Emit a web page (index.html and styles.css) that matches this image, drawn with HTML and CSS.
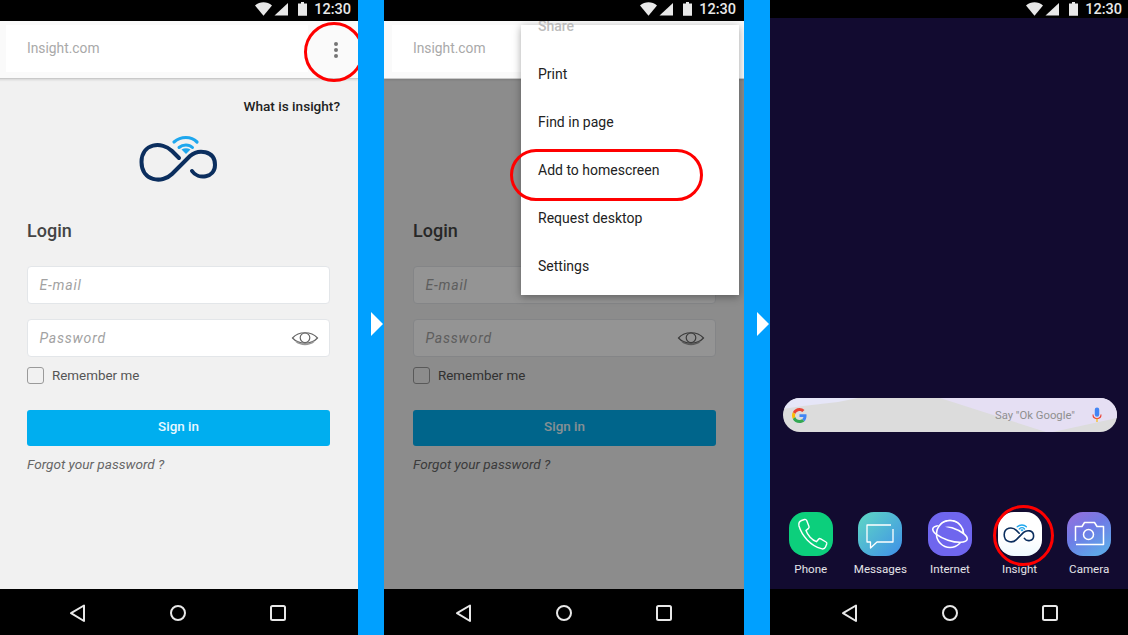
FILE: index.html
```html
<!DOCTYPE html>
<html lang="en">
<head>
<meta charset="utf-8">
<title>Insight - add to homescreen</title>
<link rel="stylesheet" href="styles.css">
</head>
<body>
<svg class="defs" width="0" height="0" aria-hidden="true">
  <defs>
    <symbol id="status-icons" viewBox="0 0 53 16">
      <path d="M0 4.500C5 .2 12 .2 17 4.500L8.500 14.800Z" fill="#e8e8e8"/>
      <path d="M33 2V14.500H19.500Z" fill="#e8e8e8"/>
      <path d="M43 2.500h3V1h3v1.500h3v12.300h-9Z" fill="#e8e8e8"/>
    </symbol>
    <symbol id="logo" viewBox="121 120 120 80">
      <path d="M179 158L172 151C162 141 141.500 143 141.500 162C141.500 181 162 184 172 174L190 156C198 149 215 150 215 165C215 178 198 180 192 171" fill="none" stroke="#0b2e5e" stroke-width="4" stroke-linecap="round"/>
      <path d="M174 142C181 136 191 136 197 142" fill="none" stroke="#1ea7ee" stroke-width="3.200" stroke-linecap="round"/>
      <path d="M179 147.500C183 144 189 144 192.500 147.500" fill="none" stroke="#1ea7ee" stroke-width="3" stroke-linecap="round"/>
      <path d="M181.500 149.500Q186 147 190.500 149.500L186 154Z" fill="#1ea7ee"/>
    </symbol>
    <symbol id="nav-icons" viewBox="0 0 220 20">
      <path d="M16 2.500V18L3 10.200Z" fill="none" stroke="#e8e8e8" stroke-width="2" stroke-linejoin="round"/>
      <circle cx="110" cy="10" r="7" fill="none" stroke="#e8e8e8" stroke-width="2"/>
      <rect x="203" y="3" width="14" height="14" rx="1.500" fill="none" stroke="#e8e8e8" stroke-width="2"/>
    </symbol>
    <symbol id="eye" viewBox="0 0 28 16">
      <path d="M1.500 8C8 1 20 1 26.500 8C20 15 8 15 1.500 8Z" fill="none" stroke="#666" stroke-width="1.200"/>
      <circle cx="14" cy="7.800" r="4.800" fill="none" stroke="#666" stroke-width="1.200"/>
      <path d="M5 11.500C10 15.500 18 15.500 23 11.500" fill="none" stroke="#999" stroke-width="1.400"/>
    </symbol>
    <linearGradient id="msg-bg" x1="0" y1="0" x2="1" y2="1">
      <stop offset="0" stop-color="#5fd8c4"/><stop offset="1" stop-color="#3f8fe8"/>
    </linearGradient>
    <linearGradient id="cam-bg" x1="0" y1="0" x2="0.600" y2="1">
      <stop offset="0" stop-color="#9a6fdc"/><stop offset="0.500" stop-color="#6e7be6"/><stop offset="1" stop-color="#5fa6e8"/>
    </linearGradient>
  </defs>
</svg>

<main class="strip">
  <section class="phone">
    <div class="status status-cropped"><svg class="status-icons"><use href="#status-icons"/></svg><span class="clock">12:30</span></div>
    <div class="screen screen-cropped">
      <header class="browser"><div class="url">Insight.com</div><div class="dots"><i></i><i></i><i></i></div></header>
      <div class="login">
        <a class="about">What is insight?</a>
        <svg class="logo"><use href="#logo"/></svg>
        <h1 class="title">Login</h1>
        <div class="field">E-mail</div>
        <div class="field field-second">Password<svg class="eye"><use href="#eye"/></svg></div>
        <div class="remember"><span class="check"></span>Remember me</div>
        <div class="signin">Sign in</div>
        <div class="forgot">Forgot your password ?</div>
      </div>
    </div>
    <nav class="nav"><svg class="nav-icons"><use href="#nav-icons"/></svg></nav>
    <div class="ring ring-dots"></div>
  </section>

  <div class="divider"><span class="arrow"></span></div>

  <section class="phone phone-wide">
    <div class="status"><svg class="status-icons"><use href="#status-icons"/></svg><span class="clock">12:30</span></div>
    <div class="screen">
      <header class="browser"><div class="url">Insight.com</div><div class="dots"><i></i><i></i><i></i></div></header>
      <div class="login">
        <a class="about">What is insight?</a>
        <svg class="logo"><use href="#logo"/></svg>
        <h1 class="title">Login</h1>
        <div class="field">E-mail</div>
        <div class="field field-second">Password<svg class="eye"><use href="#eye"/></svg></div>
        <div class="remember"><span class="check"></span>Remember me</div>
        <div class="signin">Sign in</div>
        <div class="forgot">Forgot your password ?</div>
      </div>
      <div class="dim"></div>
    </div>
    <nav class="nav"><svg class="nav-icons"><use href="#nav-icons"/></svg></nav>
    <ul class="menu">
      <li class="menu-item menu-muted">Share</li>
      <li class="menu-item">Print</li>
      <li class="menu-item">Find in page</li>
      <li class="menu-item">Add to homescreen</li>
      <li class="menu-item">Request desktop</li>
      <li class="menu-item">Settings</li>
    </ul>
    <div class="ring ring-menu"></div>
  </section>

  <div class="divider"><span class="arrow"></span></div>

  <section class="phone">
    <div class="status status-home"><svg class="status-icons"><use href="#status-icons"/></svg><span class="clock">12:30</span></div>
    <div class="home">
      <div class="search">
        <svg class="g-logo" viewBox="0 0 48 48">
          <path fill="#ea4335" d="M24 9.500c3.900 0 6.900 1.600 9.100 3.600l6.800-6.800C35.900 2.500 30.500 0 24 0 14.600 0 6.500 5.400 2.600 13.200l7.900 6.200C12.400 13.700 17.700 9.500 24 9.500z"/>
          <path fill="#4285f4" d="M46.500 24.500c0-1.600-.1-3.100-.4-4.500H24v9h12.700c-.6 2.900-2.200 5.400-4.700 7l7.700 6c4.500-4.200 6.800-10.300 6.800-17.500z"/>
          <path fill="#fbbc05" d="M10.500 28.600c-.5-1.400-.8-3-.8-4.600s.3-3.200.8-4.600l-7.900-6.200C.9 16.500 0 20.100 0 24s.9 7.500 2.600 10.800l7.900-6.200z"/>
          <path fill="#34a853" d="M24 48c6.500 0 11.900-2.100 15.900-5.800L32 36.200c-2.100 1.500-4.900 2.300-8 2.300-6.300 0-11.600-4.200-13.500-9.900l-7.900 6.200C6.500 42.600 14.600 48 24 48z"/>
        </svg>
        <span class="say">Say "Ok Google"</span>
        <svg class="mic" viewBox="0 0 12 18">
          <rect x="3.500" y="0.500" width="5" height="10.500" rx="2.500" fill="#4285f4"/>
          <path d="M1.500 8.500C1.500 11.500 3.500 13 6 13S10.500 11.500 10.500 8.500" fill="none" stroke="#ea4335" stroke-width="1.300"/>
          <path d="M6 13V17" stroke="#fbbc05" stroke-width="1.300"/>
        </svg>
      </div>
      <div class="dock">
        <div class="app">
          <svg class="app-icon" viewBox="0 0 44 44"><rect width="44" height="44" rx="16" fill="#0ccf7c"/>
            <path d="M12.500 8.500L15.500 7.500C16.500 7.200 17.300 7.700 17.700 8.600L20 14.500C20.300 15.300 20 16 19.300 16.600L17 18.500C18.500 23 23 28 27.500 29.700L29.500 27.300C30 26.600 30.900 26.400 31.700 26.800L37 30C37.900 30.500 38 31.300 37.700 32.100L36.500 35C35.800 36.600 34 37.200 32.300 36.700C21.500 33.500 13 24 10 14C9.500 11.500 10.500 9.200 12.500 8.500Z" fill="none" stroke="#fff" stroke-width="1.400"/></svg>
          <span class="app-name">Phone</span>
        </div>
        <div class="app">
          <svg class="app-icon" viewBox="0 0 44 44"><rect width="44" height="44" rx="16" fill="url(#msg-bg)"/>
            <path d="M33 13H9V30H12.500V36L19 30H35V17" fill="none" stroke="#fff" stroke-width="1.300" stroke-linejoin="round"/></svg>
          <span class="app-name">Messages</span>
        </div>
        <div class="app">
          <svg class="app-icon" viewBox="0 0 44 44"><rect width="44" height="44" rx="16" fill="#6f66ee"/>
            <circle cx="22" cy="22" r="13.500" fill="none" stroke="#fff" stroke-width="1.600"/>
            <ellipse cx="22" cy="22" rx="18" ry="6.500" transform="rotate(18 22 22)" fill="#6f66ee" stroke="#fff" stroke-width="1.600"/>
            <path d="M8.500 20C12 13 32 12 35.500 20.500L35.500 16C30 7 14 7 8.500 16Z" fill="#6f66ee"/>
            <path d="M8.500 22A13.500 13.500 0 0 1 35.500 22" fill="none" stroke="#fff" stroke-width="1.600"/></svg>
          <span class="app-name">Internet</span>
        </div>
        <div class="app">
          <div class="app-insight"><svg class="app-logo"><use href="#logo"/></svg></div>
          <span class="app-name">Insight</span>
        </div>
        <div class="app">
          <svg class="app-icon" viewBox="0 0 44 44"><rect width="44" height="44" rx="16" fill="url(#cam-bg)"/>
            <path d="M8.500 29V14.500H15L17.500 10.500H27.500L30 14.500H36.500V32.500H9" fill="none" stroke="#fff" stroke-width="1.500" stroke-linejoin="round"/>
            <circle cx="21.500" cy="22.500" r="5" fill="none" stroke="#fff" stroke-width="1.500"/></svg>
          <span class="app-name">Camera</span>
        </div>
      </div>
    </div>
    <nav class="nav nav-home"><svg class="nav-icons"><use href="#nav-icons"/></svg></nav>
    <div class="ring ring-app"></div>
  </section>
</main>
</body>
</html>
```
FILE: styles.css
```css
* { box-sizing: border-box; }
html, body { margin: 0; padding: 0; }
body { width: 1128px; height: 635px; overflow: hidden; font-family: Roboto, "Liberation Sans", sans-serif; background: #000; }
.defs { position: absolute; }
.strip { display: flex; height: 635px; }

.phone { position: relative; width: 358px; height: 635px; overflow: hidden; display: flex; flex-direction: column; flex: none; background: #000; }
.phone-wide { width: 360px; }
.divider { width: 26px; flex: none; background: #00a0ff; display: flex; align-items: center; justify-content: flex-end; padding: 13px 1px 0 0; }
.arrow { width: 0; height: 0; border-left: 12px solid #fff; border-top: 12px solid transparent; border-bottom: 12px solid transparent; }

.status { position: relative; z-index: 3; height: 21px; flex: none; width: 360px; background: #000; display: flex; justify-content: flex-end; align-items: flex-start; padding: 1px 8px 0 0; }
.status-cropped { margin-left: -1px; }
.status-icons { width: 53px; height: 16px; margin: 0 6px 0 0; }
.clock { color: #e8e8e8; font-size: 14.500px; line-height: 17px; font-weight: 500; }
.status-home { height: 18px; }

.screen { position: relative; flex: 1; width: 360px; background: #f1f1f1; display: flex; flex-direction: column; }
.screen-cropped { margin-left: -2px; }
.browser { height: 58px; flex: none; background: #fafafa; padding: 4px 50px 6px 8px; display: flex; border-bottom: 1px solid #c9c9c9; box-shadow: 0 1px 2px rgba(0,0,0,.12); position: relative; }
.url { flex: 1; background: #fff; color: #a9a9a9; font-size: 13.800px; line-height: 46px; padding-left: 21px; }
.dots { position: absolute; left: 336px; top: 21px; display: flex; flex-direction: column; gap: 2px; }
.dots i { width: 4px; height: 4px; border-radius: 50%; background: #757575; }

.login { flex: 1; display: flex; flex-direction: column; padding: 17px 28px 0 29px; }
.about { align-self: flex-end; margin-right: -10px; color: #222; font-size: 13.600px; line-height: 20px; font-weight: 500; }
.logo { width: 120px; height: 80px; margin: 4px 0 0 94px; display: block; flex: none; }
.title { margin: 19px 0 0; color: #444; font-size: 18px; line-height: 24px; font-weight: 500; }
.field { position: relative; height: 38px; margin-top: 23px; background: #fff; border: 1px solid #e3e6e9; border-radius: 4px; padding-left: 11.500px; color: #a2a2a2; font-size: 14px; line-height: 36px; font-style: italic; letter-spacing: .8px; }
.field-second { margin-top: 15px; }
.eye { position: absolute; right: 10px; top: 10px; width: 28px; height: 16px; }
.remember { display: flex; align-items: flex-start; margin-top: 9px; height: 18px; color: #555; font-size: 13.400px; line-height: 20px; }
.check { width: 17px; height: 17px; margin: 1px 8px 0 0; border: 1px solid #9a9a9a; border-radius: 3px; }
.signin { height: 36px; margin-top: 26px; background: #00aeef; border-radius: 3px; color: #e9f8ff; font-size: 13.400px; font-weight: 500; line-height: 34px; text-align: center; }
.forgot { margin-top: 9px; color: #666; font-size: 13.600px; line-height: 18px; font-style: italic; }
.dim { position: absolute; left: 0; right: 0; top: 58px; bottom: 0; background: rgba(0,0,0,.42); }

.nav { height: 46px; width: 360px; flex: none; background: #000; display: flex; padding: 14px 0 0 70px; }
.screen-cropped + .nav { margin-left: -2px; }
.nav-icons { width: 220px; height: 20px; }

.menu { position: absolute; z-index: 2; left: 137px; top: 25px; width: 218px; height: 270px; margin: 0; padding: 0; list-style: none; background: #fff; box-shadow: 0 2px 8px rgba(0,0,0,.35); }
.menu-item { height: 48px; padding-left: 17px; color: #222; font-size: 14px; line-height: 48px; }
.menu-muted { margin-top: -23px; color: #bcbcbc; font-weight: 500; }

.ring { position: absolute; z-index: 4; border: 3px solid #f00; pointer-events: none; }
.ring-dots { left: 304px; top: 22px; width: 60px; height: 60px; border-radius: 50%; }
.ring-menu { left: 126px; top: 149px; width: 193px; height: 52px; border-radius: 26px; }
.ring-app { left: 223px; top: 505px; width: 61px; height: 61px; border-radius: 50%; }

.home { flex: 1; width: 360px; background: #120b30; display: flex; flex-direction: column; padding-top: 380px; }
.search { position: relative; overflow: hidden; height: 34px; margin: 0 13px; border-radius: 17px; display: flex; align-items: center; padding: 0 14px 0 9px; background: #dcdcdc; }
.search::before { content: ""; position: absolute; inset: 0; background: #e5dff3; clip-path: polygon(157px 0, 334px 0, 334px 20px, 270px 34px, 263px 34px); }
.search::after { content: ""; position: absolute; inset: 0; background: #e6e6f8; clip-path: polygon(0 0, 75px 0, 55px 4px, 20px 8px, 0 11px); }
.g-logo, .say, .mic { position: relative; z-index: 1; }
.g-logo { width: 15px; height: 15px; }
.say { margin: 2px 0 0 auto; color: #8f8f8f; font-size: 11.300px; line-height: 14px; }
.mic { width: 12px; height: 16px; margin-left: 16px; }
.dock { margin-top: auto; display: grid; grid-template-columns: repeat(5, 1fr); padding: 0 6px 12px; }
.app { display: flex; flex-direction: column; align-items: center; }
.app-icon { width: 44px; height: 44px; display: block; }
.app-insight { width: 44px; height: 44px; border-radius: 16px; background: linear-gradient(#fff 60%, #eefaff); display: flex; align-items: center; justify-content: center; overflow: hidden; }
.app-logo { width: 48px; height: 32px; flex: none; }
.app-name { margin-top: 5px; color: #e4e4e8; font-size: 11.600px; line-height: 16px; }
```
